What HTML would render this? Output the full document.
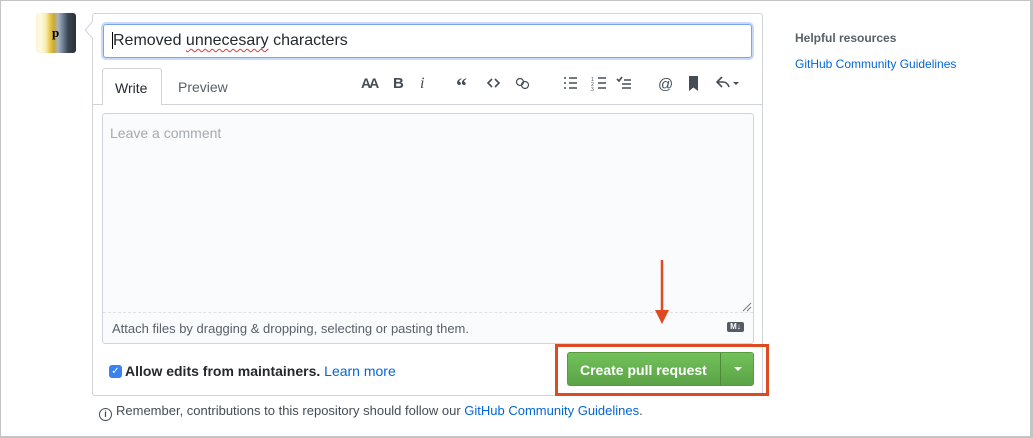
<!DOCTYPE html>
<html><head><meta charset="utf-8"><style>
*{box-sizing:border-box;margin:0;padding:0}
body{width:1033px;height:438px;background:#fff;font-family:"Liberation Sans",Arial,sans-serif;position:relative;overflow:hidden;color:#24292e}
.abs{position:absolute}
#frame{left:0;top:0;width:1033px;height:438px;border:1px solid #c4c4c4;border-right-width:3px;border-bottom-width:2px}
#av{left:36px;top:13px;width:40px;height:40px;border-radius:3px;overflow:hidden;background:linear-gradient(90deg,#f6f3d8 0,#fffbe0 12%,#f6ecb0 25%,#e8c64a 35%,#c9a934 45%,#a8b4c2 55%,#6b7d93 68%,#3b4650 80%,#2b3136 100%)}
#av span{position:absolute;left:16px;top:12px;font:bold 13px "Liberation Serif",serif;color:#000}
#box{left:92px;top:13px;width:671px;height:383px;border:1px solid #d1d5da;border-radius:3px}
#title{left:103px;top:24px;width:649px;height:34px;border:1px solid #79a6e8;border-radius:3px;box-shadow:0 0 0 2px #c8dafa;font-size:16px;padding:7px 9px;color:#24292e}
#title u{text-decoration:underline wavy #e03b3b;text-underline-offset:3px;text-decoration-thickness:1px}
#tabline{left:93px;top:104px;width:669px;height:1px;background:#d1d5da}
#write{left:102px;top:68px;width:60px;height:37px;border:1px solid #d1d5da;border-bottom:none;border-radius:3px 3px 0 0;background:#fff;font-size:14px;padding:11px 0 0 12px}
#prev{left:178px;top:79px;font-size:14px;color:#586069}
#ta{left:102px;top:113px;width:652px;height:231px;border:1px solid #d1d5da;border-radius:3px;background:#fafbfc}
#ph{left:110px;top:125px;font-size:14px;color:#a3aab1}
#dash{left:103px;top:312px;width:650px;border-top:1px dashed #dfe2e5}
#attach{left:112px;top:321px;font-size:13px;color:#586069}
#md{left:727px;top:322px;width:17px;height:10px;background:#555b63;border-radius:2px;color:#fff;font-size:8px;font-weight:bold;line-height:10px;text-align:center}
#cb{left:109px;top:365px;width:13px;height:13px;background:#3b82f0;border-radius:3px;color:#fff;font-size:10px;line-height:13px;text-align:center}
#allow{left:125px;top:363px;font-size:14px;font-weight:bold}
#allow a{color:#0366d6;font-weight:normal;text-decoration:none}
#orange{left:555px;top:344px;width:214px;height:52px;border:3px solid #de4b22}
#btn{left:567px;top:352px;width:187px;height:34px;border:1px solid #5a9a3e;border-radius:3px;background:linear-gradient(#72c15a,#5ba347);color:#fff;font-size:14px;font-weight:bold}
#btn .t{position:absolute;left:12px;top:9px}
#btn .d{position:absolute;left:152px;top:0;width:1px;height:32px;background:#4b8a35}
#btn .c{position:absolute;left:166px;top:14px;border:4px solid transparent;border-top-color:#fff;border-bottom:none}
#foot{left:99px;top:403px;font-size:13px;color:#444d56}
#foot a{color:#0366d6;text-decoration:none}
#hr{left:795px;top:31px;font-size:12px;font-weight:bold;color:#586069}
#gl{left:795px;top:57px;font-size:12px;color:#0366d6}
</style></head><body>
<div id="frame" class="abs"></div>
<div id="av" class="abs"><span>p</span></div>
<div id="box" class="abs"></div>
<svg class="abs" style="left:84px;top:21px" width="10" height="18"><path d="M9 0 L1 9 L9 18" fill="#fff" stroke="#d1d5da"/></svg>
<div id="title" class="abs"><span style="border-left:1px solid #000;margin-left:-1px"></span>Removed <u>unnecesary</u> characters</div>
<div id="tabline" class="abs"></div>
<div id="write" class="abs">Write</div>
<div id="prev" class="abs">Preview</div>
<svg class="abs" style="left:358px;top:72px" width="390" height="22" fill="none" stroke="#444d56" stroke-width="1.6">
<text x="3" y="16" font-family="Liberation Sans" font-weight="bold" font-size="14" fill="#444d56" stroke="none" letter-spacing="-2">AA</text>
<text x="35" y="16" font-family="Liberation Sans" font-weight="bold" font-size="15" fill="#444d56" stroke="none">B</text>
<text x="62" y="16" font-family="Liberation Serif" font-style="italic" font-size="16" fill="#444d56" stroke="none">i</text>
<text x="98" y="21" font-family="Liberation Serif" font-weight="bold" font-size="22" fill="#444d56" stroke="none">“</text>
<path d="M134 7 L130 11 L134 15 M137 7 L141 11 L137 15"/>
<circle cx="162" cy="10" r="3.5" stroke-width="1.2"/><circle cx="167" cy="13" r="3.5" stroke-width="1.2"/>
<path d="M206 6h2M206 11h2M206 16h2M211 6h8M211 11h8M211 16h8"/>
<path d="M240 6h8M240 11h8M240 16h8" /><text x="233" y="9" font-size="5" fill="#444d56" stroke="none">1</text><text x="233" y="14" font-size="5" fill="#444d56" stroke="none">2</text><text x="233" y="19" font-size="5" fill="#444d56" stroke="none">3</text>
<path d="M259 7l2 2 3-4M266 8h7M264 12h9M264 16h9"/>
<text x="300" y="17" font-family="Liberation Sans" font-size="15" fill="#444d56" stroke="none">@</text>
<path d="M331 4h9v15l-4.5-3.5L331 19z" fill="#444d56" stroke="none"/>
<path d="M364 5l-5 5 5 5M359 10h6c3 0 5 2 6 5"/>
<path d="M375 10h6l-3 3z" fill="#444d56" stroke="none"/>
</svg>
<div id="ta" class="abs"></div>
<div id="ph" class="abs">Leave a comment</div>
<svg class="abs" style="left:742px;top:302px" width="10" height="10" stroke="#777"><path d="M1 9L9 1M5 9L9 5"/></svg>
<div id="dash" class="abs"></div>
<div id="attach" class="abs">Attach files by dragging &amp; dropping, selecting or pasting them.</div>
<div id="md" class="abs">M↓</div>
<div id="cb" class="abs">✓</div>
<div id="allow" class="abs">Allow edits from maintainers. <a>Learn more</a></div>
<svg class="abs" style="left:654px;top:260px" width="16" height="66"><path d="M8 0V52" stroke="#de4b22" stroke-width="2.5"/><path d="M1 50L8 64L15 50z" fill="#de4b22"/></svg>
<div id="orange" class="abs"></div>
<div id="btn" class="abs"><span class="t">Create pull request</span><span class="d"></span><span class="c"></span></div>
<div id="foot" class="abs"><span style="display:inline-block;width:13px;height:13px;border:1px solid #444d56;border-radius:50%;font-size:9px;text-align:center;line-height:11px;font-weight:bold;vertical-align:-2px;margin-right:4px">i</span>Remember, contributions to this repository should follow our <a>GitHub Community Guidelines</a>.</div>
<div id="hr" class="abs">Helpful resources</div>
<div id="gl" class="abs">GitHub Community Guidelines</div>
</body></html>
